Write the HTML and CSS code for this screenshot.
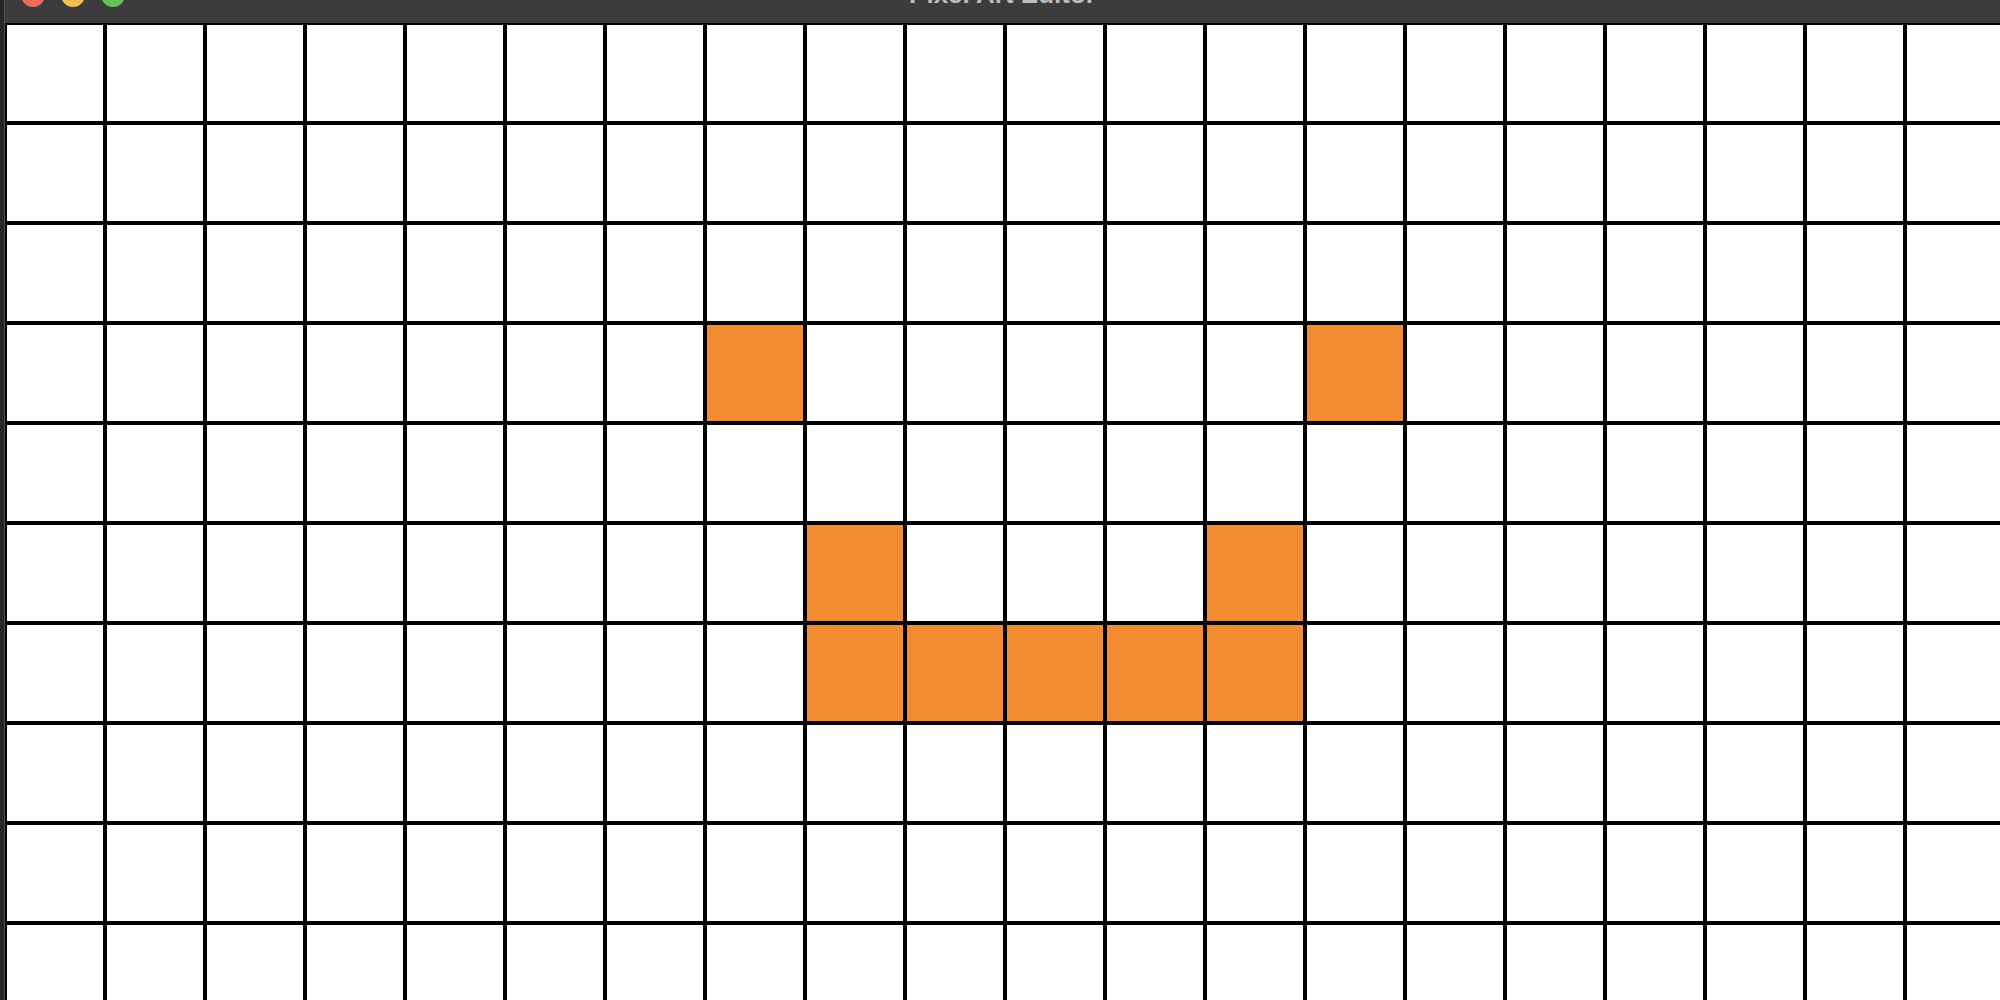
FILE: index.html
```html
<!DOCTYPE html>
<html>
<head>
<meta charset="utf-8">
<title>Pixel Art Editor</title>
<link rel="stylesheet" href="styles.css">
</head>
<body>
<div class="window">
  <div class="edge"></div>
  <div class="main">
    <div class="titlebar">
      <div class="lights">
        <span class="light red"></span>
        <span class="light yellow"></span>
        <span class="light green"></span>
      </div>
      <div class="title">Pixel Art Editor</div>
    </div>
    <div class="canvas">
      <div class="grid">
        <i></i><i></i><i></i><i></i><i></i><i></i><i></i><i></i><i></i><i></i><i></i><i></i><i></i><i></i><i></i><i></i><i></i><i></i><i></i><i></i>
        <i></i><i></i><i></i><i></i><i></i><i></i><i></i><i></i><i></i><i></i><i></i><i></i><i></i><i></i><i></i><i></i><i></i><i></i><i></i><i></i>
        <i></i><i></i><i></i><i></i><i></i><i></i><i></i><i></i><i></i><i></i><i></i><i></i><i></i><i></i><i></i><i></i><i></i><i></i><i></i><i></i>
        <i></i><i></i><i></i><i></i><i></i><i></i><i></i><i class="on"></i><i></i><i></i><i></i><i></i><i></i><i class="on"></i><i></i><i></i><i></i><i></i><i></i><i></i>
        <i></i><i></i><i></i><i></i><i></i><i></i><i></i><i></i><i></i><i></i><i></i><i></i><i></i><i></i><i></i><i></i><i></i><i></i><i></i><i></i>
        <i></i><i></i><i></i><i></i><i></i><i></i><i></i><i></i><i class="on"></i><i></i><i></i><i></i><i class="on"></i><i></i><i></i><i></i><i></i><i></i><i></i><i></i>
        <i></i><i></i><i></i><i></i><i></i><i></i><i></i><i></i><i class="on"></i><i class="on"></i><i class="on"></i><i class="on"></i><i class="on"></i><i></i><i></i><i></i><i></i><i></i><i></i><i></i>
        <i></i><i></i><i></i><i></i><i></i><i></i><i></i><i></i><i></i><i></i><i></i><i></i><i></i><i></i><i></i><i></i><i></i><i></i><i></i><i></i>
        <i></i><i></i><i></i><i></i><i></i><i></i><i></i><i></i><i></i><i></i><i></i><i></i><i></i><i></i><i></i><i></i><i></i><i></i><i></i><i></i>
        <i></i><i></i><i></i><i></i><i></i><i></i><i></i><i></i><i></i><i></i><i></i><i></i><i></i><i></i><i></i><i></i><i></i><i></i><i></i><i></i>
      </div>
    </div>
  </div>
</div>
</body>
</html>
```
FILE: styles.css
```css
html, body {
  margin: 0;
  padding: 0;
  width: 2000px;
  height: 1000px;
  overflow: hidden;
  background: #ffffff;
  font-family: "Liberation Sans", Arial, sans-serif;
}
.window {
  display: flex;
  width: 2000px;
  height: 1000px;
}
.edge {
  width: 4px;
  flex: none;
  background: #262626;
  border-right: 1px solid #505050;
}
.main {
  flex: 1;
  display: flex;
  flex-direction: column;
  min-width: 0;
}
.titlebar {
  height: 23px;
  flex: none;
  background: #3c3c3c;
  overflow: hidden;
  display: grid;
  grid-template-columns: 1fr;
}
.lights {
  grid-area: 1 / 1;
  display: flex;
  gap: 16px;
  margin-top: -17px;
  margin-left: 16px;
  height: 24px;
}
.light {
  width: 24px;
  height: 24px;
  border-radius: 50%;
  display: block;
}
.red { background: #ee6a5f; }
.yellow { background: #f5bf4f; }
.green { background: #61c554; }
.title {
  grid-area: 1 / 1;
  text-align: center;
  font-weight: bold;
  font-size: 26px;
  line-height: 26px;
  margin-top: -19px;
  color: #bdbdbd;
  white-space: nowrap;
}
.canvas {
  flex: 1;
  overflow: hidden;
  background: #ffffff;
}
.grid {
  display: grid;
  grid-template-columns: repeat(20, 100px);
  grid-auto-rows: 100px;
  width: 2000px;
}
.grid i {
  display: block;
  box-sizing: border-box;
  border: 2px solid #000000;
  background: #ffffff;
}
.grid i.on {
  background: #f28d33;
}
```
